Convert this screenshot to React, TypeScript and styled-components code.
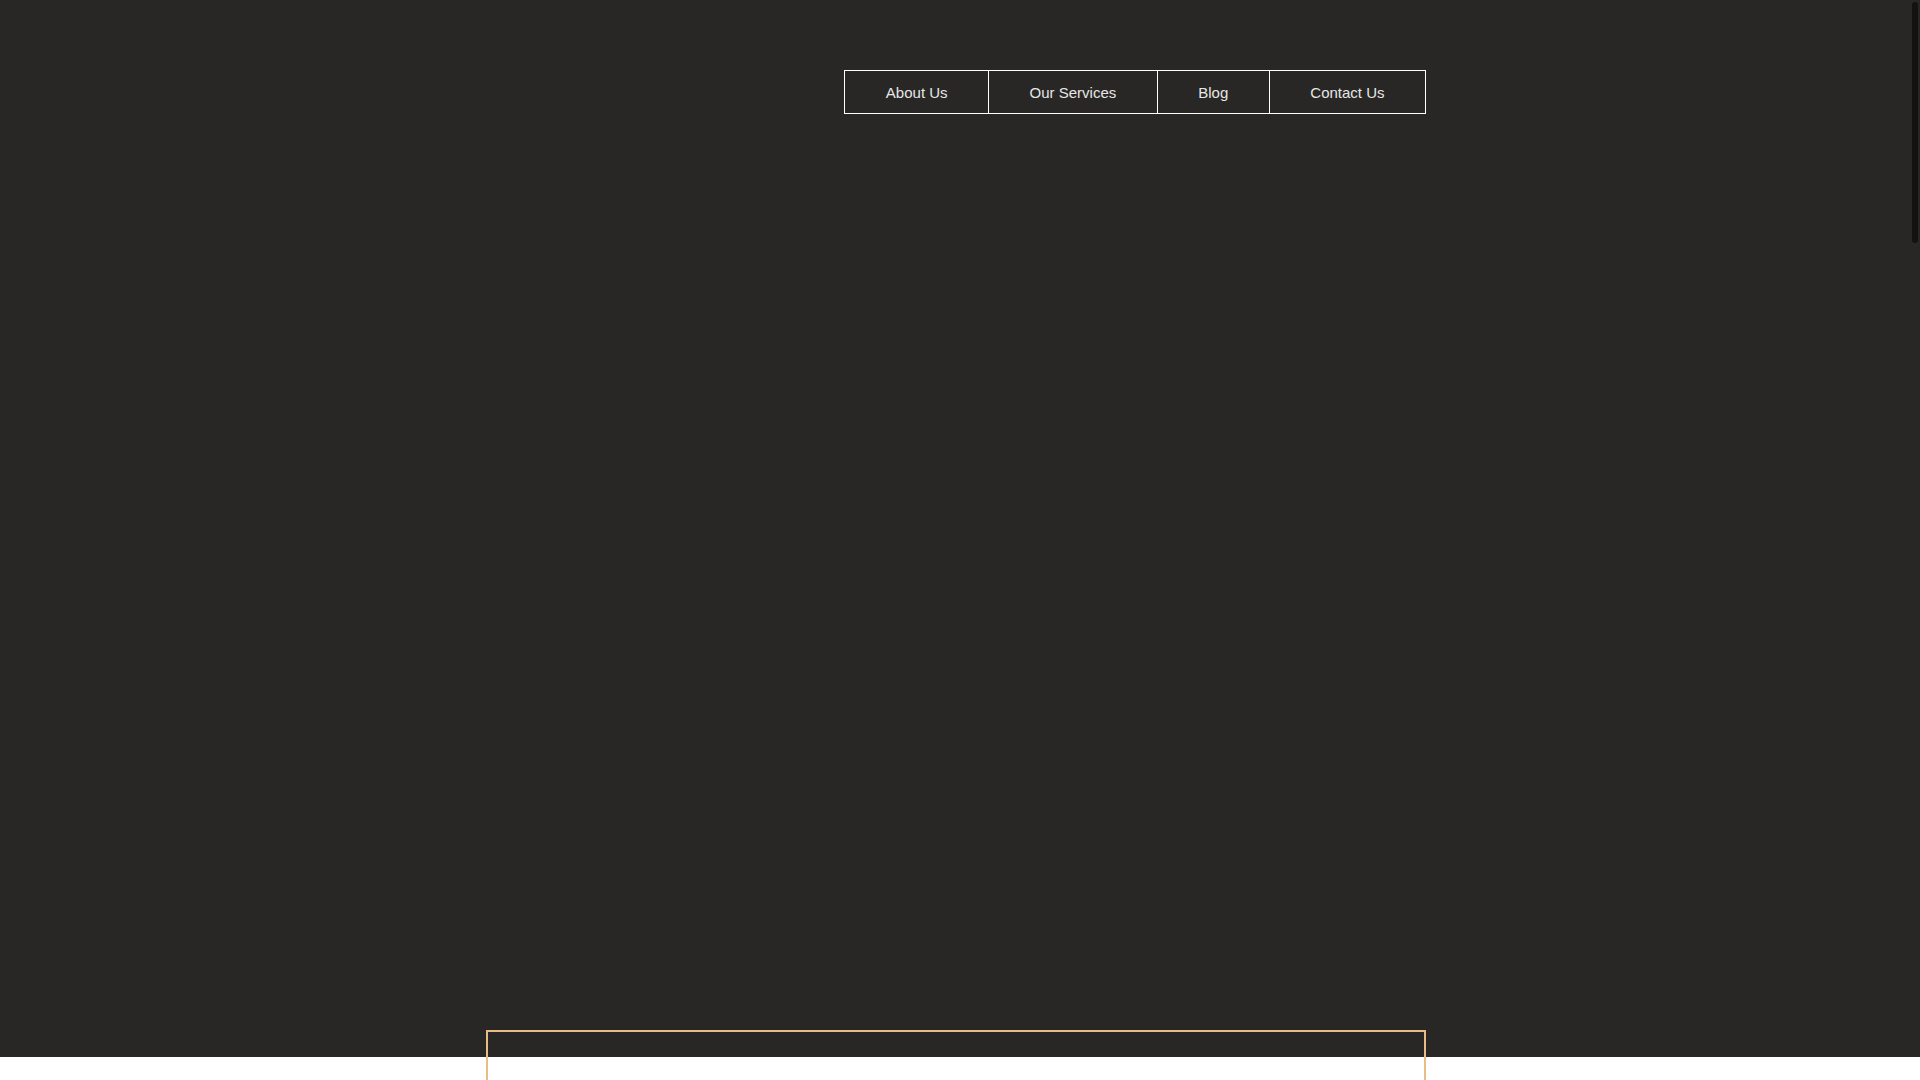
import React, { useRef, useState, useEffect } from "react";
import styled, { createGlobalStyle } from "styled-components";

const GlobalStyle = createGlobalStyle`
  html, body {
    margin: 0;
    padding: 0;
    height: 100%;
    overflow: hidden;
  }
  body {
    background: #ffffff;
    font-family: "Liberation Sans", Arial, sans-serif;
  }
`;

const Shell = styled.div`
  display: flex;
  height: 100vh;
  width: 100%;
`;

const Viewport = styled.div`
  flex: 1;
  min-width: 0;
  height: 100%;
  overflow-y: auto;
  background: #ffffff;
  scrollbar-width: none;
  &::-webkit-scrollbar {
    display: none;
  }
`;

const ScrollTrack = styled.div`
  width: 10px;
  flex: none;
  height: 100%;
  box-sizing: border-box;
  padding: 2px;
  background: linear-gradient(to bottom, #282725 0, #282725 1057px, #ffffff 1057px);
`;

const ScrollThumb = styled.div`
  width: 6px;
  border-radius: 3px;
  background: #121212;
`;

const Page = styled.div`
  min-height: 4820px;
  display: flex;
  flex-direction: column;
`;

const Hero = styled.header`
  background: #282725;
  height: 1057px;
  padding-top: 70px;
  box-sizing: border-box;
`;

const Container = styled.div`
  width: 940px;
  margin-left: calc(50% - 469px);
  display: flex;
  flex-direction: column;
`;

const Nav = styled.nav`
  align-self: flex-end;
  display: flex;
  border: 1px solid #ffffff;
  height: 44px;
  box-sizing: border-box;
`;

const NavItem = styled.a<{ $first?: boolean }>`
  display: flex;
  align-items: center;
  justify-content: center;
  padding: 0 40.5px;
  height: 42px;
  border-left: ${(p) => (p.$first ? "none" : "1px solid #ffffff")};
  color: #e6e6e6;
  font-family: "Liberation Sans", Arial, sans-serif;
  font-size: 15px;
  text-decoration: none;
  white-space: nowrap;
  cursor: pointer;
`;

const Main = styled.main`
  flex: 1;
`;

const Card = styled.section`
  margin-top: -27px;
  height: 3740px;
  border: 2px solid #e9bc87;
  box-sizing: border-box;
`;

const items = ["About Us", "Our Services", "Blog", "Contact Us"];

export default function App() {
  const ref = useRef<HTMLDivElement>(null);
  const [thumb, setThumb] = useState({ top: 0, height: 238 });

  const update = () => {
    const el = ref.current;
    if (!el) return;
    const track = el.clientHeight - 4;
    const ratio = el.clientHeight / el.scrollHeight;
    const height = Math.max(20, track * ratio);
    const maxScroll = el.scrollHeight - el.clientHeight;
    const top = maxScroll > 0 ? (el.scrollTop / maxScroll) * (track - height) : 0;
    setThumb({ top, height });
  };

  useEffect(() => {
    update();
    window.addEventListener("resize", update);
    return () => window.removeEventListener("resize", update);
  }, []);

  return (
    <>
      <GlobalStyle />
      <Shell>
        <Viewport ref={ref} onScroll={update}>
          <Page>
            <Hero>
              <Container>
                <Nav>
                  {items.map((label, i) => (
                    <NavItem key={label} $first={i === 0}>
                      {label}
                    </NavItem>
                  ))}
                </Nav>
              </Container>
            </Hero>
            <Main>
              <Container>
                <Card />
              </Container>
            </Main>
          </Page>
        </Viewport>
        <ScrollTrack>
          <ScrollThumb style={{ marginTop: thumb.top, height: thumb.height }} />
        </ScrollTrack>
      </Shell>
    </>
  );
}
